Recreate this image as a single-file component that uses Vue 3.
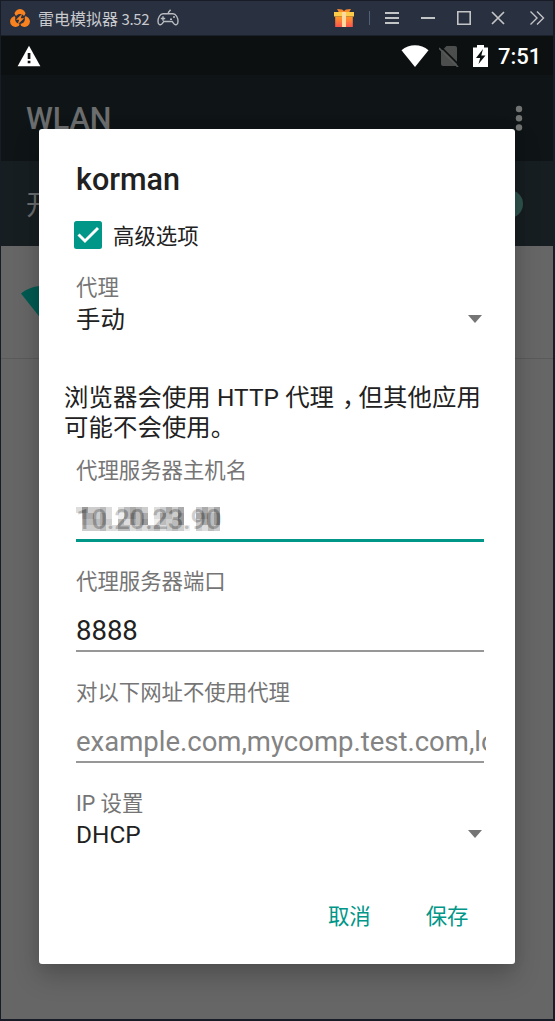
<script setup>
const fields = [
  { label: '代理服务器主机名', value: '10.20.23.90', masked: true, active: true },
  { label: '代理服务器端口', value: '8888' },
  { label: '对以下网址不使用代理', value: 'example.com,mycomp.test.com,localhost', hint: true },
]

// Grey strength of each mosaic cell, 0 (clear) to 9 (darkest).
const mosaic = [
  '263342024543023535003535',
  '055352014645025436005646',
  '044453042546014346003546',
  '033342244232342343103243',
]
const cells = mosaic.flatMap((row, y) =>
  [...row].map((v, x) => ({ x: x * 6, y: y * 6, fill: `rgb(${[1, 1, 1].map(() => 255 - v * 23).join(',')})` })),
)
</script>

<template>
  <div class="window">
    <header class="titlebar">
      <svg class="logo" viewBox="0 0 22 20" width="22" height="20">
        <g fill="#f9821f">
          <circle cx="11" cy="6.600" r="5.600" /><circle cx="6.500" cy="13.500" r="5.400" /><circle cx="15.500" cy="13.500" r="5.400" />
        </g>
        <path d="M5 6.200l2 3M17 6.200l-2 3M11 19v-3" stroke="#293040" stroke-width="1.200" />
        <circle cx="11" cy="11" r="4.900" fill="#293040" />
        <path d="M13.200 5.800 7 11.700h3.200L8.600 16.400l6.600-6.200h-3.400z" fill="#f9821f" />
      </svg>
      <span class="name">雷电模拟器 <span class="version">3.52</span></span>
      <svg class="pad" viewBox="0 0 24 18" width="24" height="18" fill="none" stroke="#b9bcc0" stroke-width="1.400">
        <path d="M12.500 5V3.200L14.600.8M7 4.800h10c3 0 5 4 5 7.600 0 3.600-2.700 4.200-4.400 2l-1.400-1.900H7.800l-1.400 1.900c-1.700 2.200-4.400 1.600-4.400-2C2 8.800 4 4.800 7 4.800zM4.800 9.500h4.400M7 7.300v4.400M14 10.200h2M17 8h2" />
      </svg>
      <span class="grow"></span>
      <svg class="gift" viewBox="0 0 20 20" width="20" height="20">
        <defs>
          <linearGradient id="box" x1="0" y1="0" x2="0" y2="1">
            <stop offset="0" stop-color="#ff9a25" /><stop offset="1" stop-color="#fb5350" />
          </linearGradient>
        </defs>
        <path d="M3 1l5 .6L10 3l2-1.400L17 1l-2 3.500H5z" fill="#f98a2c" />
        <path d="M0 4h20v4.500H0z" fill="#fbcb4a" />
        <path d="M1.200 8.500h17.600V19H1.200z" fill="url(#box)" />
        <path d="M8 4h4v15H8z" fill="#fdd9a0" />
      </svg>
      <span class="sep"></span>
      <svg class="controls" viewBox="0 0 164 20" width="164" height="20" fill="none" stroke="#c3c4c5" stroke-width="2">
        <path d="M0 5h14M0 10h14M0 15h14M36 10h14" />
        <path d="M72.800 3.800h12.400v12.400H72.800z" stroke-width="1.600" />
        <path d="M107 4l12 12M119 4l-12 12" stroke-width="1.700" />
        <path d="M145.500 3.500l6.500 6.500-6.500 6.500M152 3.500l6.500 6.500-6.500 6.500" stroke-width="1.400" />
      </svg>
    </header>

    <main class="screen">
      <div class="status">
        <svg class="warn" viewBox="0 0 24 22" width="24" height="22">
          <path d="M12 .8 23.400 21.200H.6z" fill="#fff" />
          <path d="M10.700 8h2.700v6h-2.700zM10.700 15.700h2.700v2.600h-2.700z" fill="#111" />
        </svg>
        <span class="grow"></span>
        <svg class="wifi" viewBox="0 0 28 22" width="28" height="22">
          <path d="M.5 5.300C8-1.500 20-1.500 27.500 5.300L14 22z" fill="#fff" />
        </svg>
        <svg class="sim" viewBox="0 0 20 22" width="20" height="22">
          <path d="M7.500 1H16q2 0 2 2v16q0 2-2 2H4q-2 0-2-2V6.500z" fill="#4c4e4e" />
          <path d="M1.500 1.500 20 20" stroke="#0c1010" stroke-width="1.600" />
          <path d="M0 3l19 19" stroke="#555757" stroke-width="1.700" />
        </svg>
        <svg class="battery" viewBox="0 0 15 22" width="15" height="22">
          <path d="M4 0h7v2.500h4V22H0V2.500h4z" fill="#fff" />
          <path d="M10 4 3 13h4.200L5.500 19l7-8.500H8.300z" fill="#0c1010" />
        </svg>
        <span class="clock">7:51</span>
      </div>
      <div class="appbar">
        <span>WLAN</span>
        <svg viewBox="0 0 8 26" width="8" height="26" fill="#707372">
          <circle cx="4" cy="4" r="3.200" /><circle cx="4" cy="13.200" r="3.200" /><circle cx="4" cy="22.500" r="3.200" />
        </svg>
      </div>
      <div class="switchbar"><span>开启</span><i class="thumb"></i></div>
      <div class="network">
        <svg viewBox="0 0 42 35" width="42" height="35">
          <path d="M0 7.500C12-2.500 30-2.500 42 7.500L21 34z" fill="#005a51" />
        </svg>
      </div>
    </main>

    <section class="dialog">
      <h1>korman</h1>
      <div class="check">
        <svg viewBox="0 0 28 28" width="28" height="28">
          <rect width="28" height="28" rx="2.500" fill="#009688" />
          <path d="M4.500 13.500l6.500 6.500L24 7" fill="none" stroke="#fff" stroke-width="2.900" />
        </svg>
        <span>高级选项</span>
      </div>
      <div class="label proxy">代理</div>
      <div class="select"><span>手动</span><i></i></div>
      <p>浏览器会使用 HTTP 代理<span class="comma">，</span>但其他应用<br>可能不会使用。</p>
      <div v-for="f in fields" :key="f.label" class="field">
        <div class="label">{{ f.label }}</div>
        <div class="input" :class="{ hint: f.hint, masked: f.masked }">
          {{ f.value }}
          <svg v-if="f.masked" class="mosaic" viewBox="0 0 144 24" width="144" height="24" shape-rendering="crispEdges">
            <rect v-for="c in cells" :key="`${c.x}-${c.y}`" :x="c.x" :y="c.y" width="6" height="6" :fill="c.fill" />
          </svg>
        </div>
        <div class="line" :class="{ active: f.active }"></div>
      </div>
      <div class="label">IP 设置</div>
      <div class="select"><span>DHCP</span><i></i></div>
      <div class="actions"><span>取消</span><span>保存</span></div>
    </section>
  </div>
</template>

<style>
body { margin: 0; background: #171d27; }
</style>

<style scoped>
.window {
  position: relative; box-sizing: border-box; width: 555px; height: 1021px;
  padding: 1px 2px 2px 1px; overflow: hidden; background: #171c26;
  font-family: Roboto, "Noto Sans CJK SC", sans-serif; color: #212121;
}
.grow { flex: 1; }
.titlebar { display: flex; align-items: center; height: 34px; background: #293040; border-bottom: 1px solid #1b212b; }
.logo { margin-left: 8px; }
.name { margin-left: 7px; font: 16px/32px "Noto Sans CJK SC", sans-serif; color: #c8cacd; white-space: nowrap; }
.version { font-size: 15px; letter-spacing: -.4px; }
.pad { margin-left: 7px; }
.sep { width: 1px; height: 14px; margin: 0 15px; background: #526075; }
.controls { margin-right: 4px; }
.screen { height: 983px; background: #666; }
.status { display: flex; align-items: center; height: 39px; background: #0c1010; }
.warn { margin-left: 16px; }
.sim { margin-left: 10px; }
.battery { margin-left: 14px; }
.clock { width: 43px; margin: 2px 12px 0 10px; font-size: 22px; font-weight: 500; line-height: 36px; color: #fff; }
.appbar { display: flex; align-items: center; justify-content: space-between; height: 86px; padding: 0 30px 0 25px; background: #0f1517; font-size: 30.5px; font-weight: 500; color: #6b6d6e; }
.switchbar { display: flex; align-items: center; justify-content: space-between; height: 85px; padding: 0 30px 0 25px; background: #171e21; font-size: 27px; color: #6b6d6e; }
.thumb { width: 28px; height: 28px; border-radius: 50%; background: #2f544d; }
.network { display: flex; align-items: flex-start; box-sizing: border-box; height: 113px; padding: 40px 0 0 20px; border-bottom: 1px solid #5a5a5a; }
.dialog {
  position: absolute; left: 39px; top: 129px; box-sizing: border-box; width: 476px; height: 835px;
  padding: 31px 29px 0 37px; border-radius: 3px; background: #fff;
  box-shadow: 0 12px 26px rgba(0, 0, 0, .22), 0 0 14px rgba(0, 0, 0, .06);
}
h1 { height: 40px; margin: 0; font-size: 30.5px; font-weight: 500; line-height: 40px; }
.check { display: flex; align-items: center; height: 40px; margin: 15px 0 0 -2px; font-size: 21.4px; }
.check span { margin: -2px 0 0 11px; }
.label { height: 28px; font-size: 21.4px; line-height: 29px; color: #757575; white-space: nowrap; }
.proxy { margin-top: 19px; line-height: 28px; }
.select { display: flex; align-items: center; justify-content: space-between; height: 34px; font-size: 24.4px; line-height: 34px; }
.select span { padding-top: 2px; }
.select i { margin-right: 4px; border: 7px solid transparent; border-top: 8px solid #757575; border-bottom: 0; }
p { height: 59px; margin: 47px 0 14px -12px; font-size: 24.4px; line-height: 29.5px; letter-spacing: .08px; white-space: nowrap; }
.comma { margin: 0 -8px 0 8px; }
.field { height: 111px; }
.input { position: relative; height: 40px; margin-top: 15px; font-size: 27.5px; line-height: 42px; white-space: nowrap; overflow: hidden; }
.hint { color: #838383; }
.masked { color: #555; font-weight: 500; letter-spacing: -.25px; }
.mosaic { position: absolute; left: 0; top: 8px; opacity: .72; }
.line { width: 408px; height: 2px; background: #979797; }
.active { height: 3px; background: #009688; }
.actions { display: flex; justify-content: flex-end; gap: 55px; margin-top: 47px; padding-right: 17.5px; font-size: 21.4px; line-height: 37px; color: #009688; }
</style>
